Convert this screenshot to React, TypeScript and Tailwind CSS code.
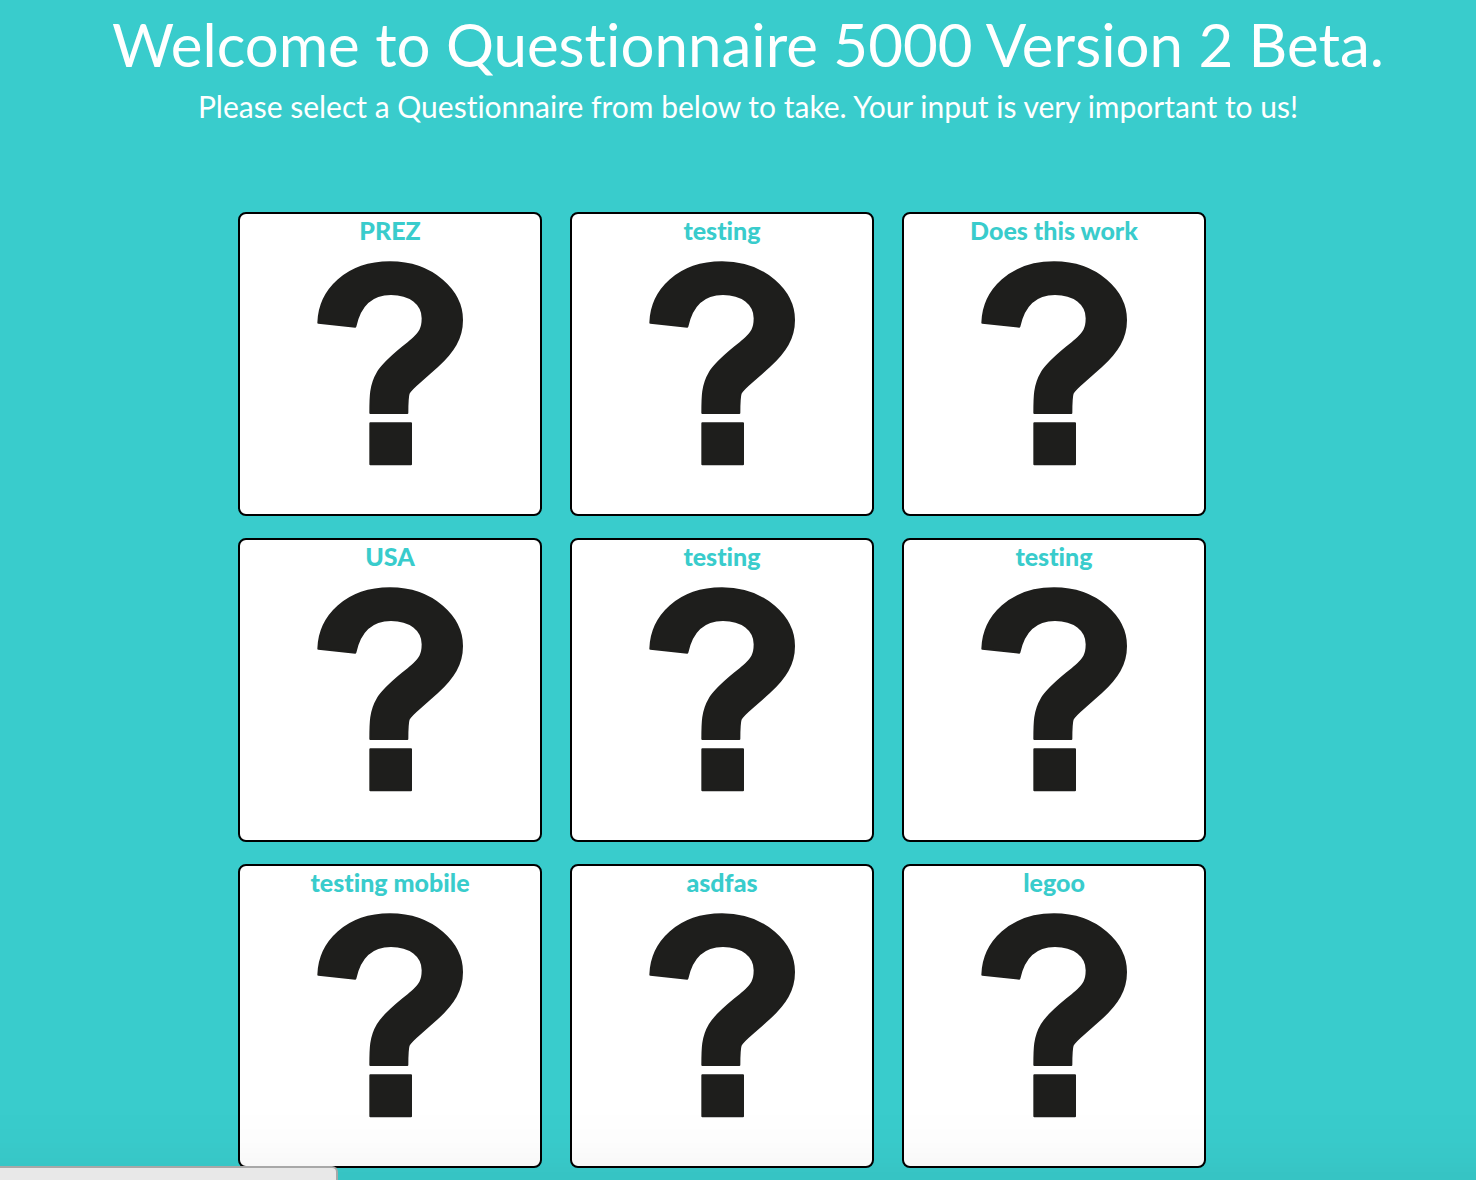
const questionnaires = [
  'PREZ',
  'testing',
  'Does this work',
  'USA',
  'testing',
  'testing',
  'testing mobile',
  'asdfas',
  'legoo',
];

function QuestionMark() {
  return (
    <svg
      aria-hidden="true"
      viewBox="258 180 444 618"
      className="mt-3.5 h-[206px] w-[148px]"
      fill="#1e1e1c"
      stroke="#1e1e1c"
      strokeWidth="6"
      strokeLinejoin="round"
    >
      <path d="M265 368C268 270 350 187 480 187C610 187 696 275 696 360C696 415 670 455 622 499C560 555 542 565 536 580C533 590 532 605 532 639L421 639C421 590 421 555 443 518C465 482 505 454 545 420C570 398 578 385 578 355C578 312 540 282 483 282C425 282 389 318 376 380Z" />
      <rect x="421" y="670" width="122" height="123" />
    </svg>
  );
}

function QuestionnaireCard({ title }: { title: string }) {
  return (
    <a
      href="#take"
      className="flex h-[304px] w-[304px] flex-col items-center rounded-lg border-2 border-black bg-white"
    >
      <h3 className="text-[25px] leading-8 font-black text-[#39cccc]">{title}</h3>
      <QuestionMark />
    </a>
  );
}

export default function App() {
  return (
    <div className="min-h-screen bg-[#39cccc] font-['Lato',sans-serif] [font-variant-ligatures:none]">
      <header className="pt-2 pl-5 text-center text-white">
        <h1 className="text-[60px] leading-[72px]">Welcome to Questionnaire 5000 Version 2 Beta.</h1>
        <h2 className="text-[30px] leading-[52px]">
          Please select a Questionnaire from below to take. Your input is very important to us!
        </h2>
      </header>
      <main className="mt-20 flex justify-center pr-8">
        <div className="grid grid-cols-3 gap-x-7 gap-y-[22px]">
          {questionnaires.map((title, index) => (
            <QuestionnaireCard key={index} title={title} />
          ))}
        </div>
      </main>
      <div className="pointer-events-none fixed inset-x-0 bottom-0 h-[72px] bg-linear-to-b from-transparent via-black/1 to-black/4" />
      <div className="fixed bottom-0 left-0 h-3.5 w-[338px] rounded-tr-md border-t-2 border-r-2 border-[#a8a8a8] bg-[#e8e8e8]" />
    </div>
  );
}
